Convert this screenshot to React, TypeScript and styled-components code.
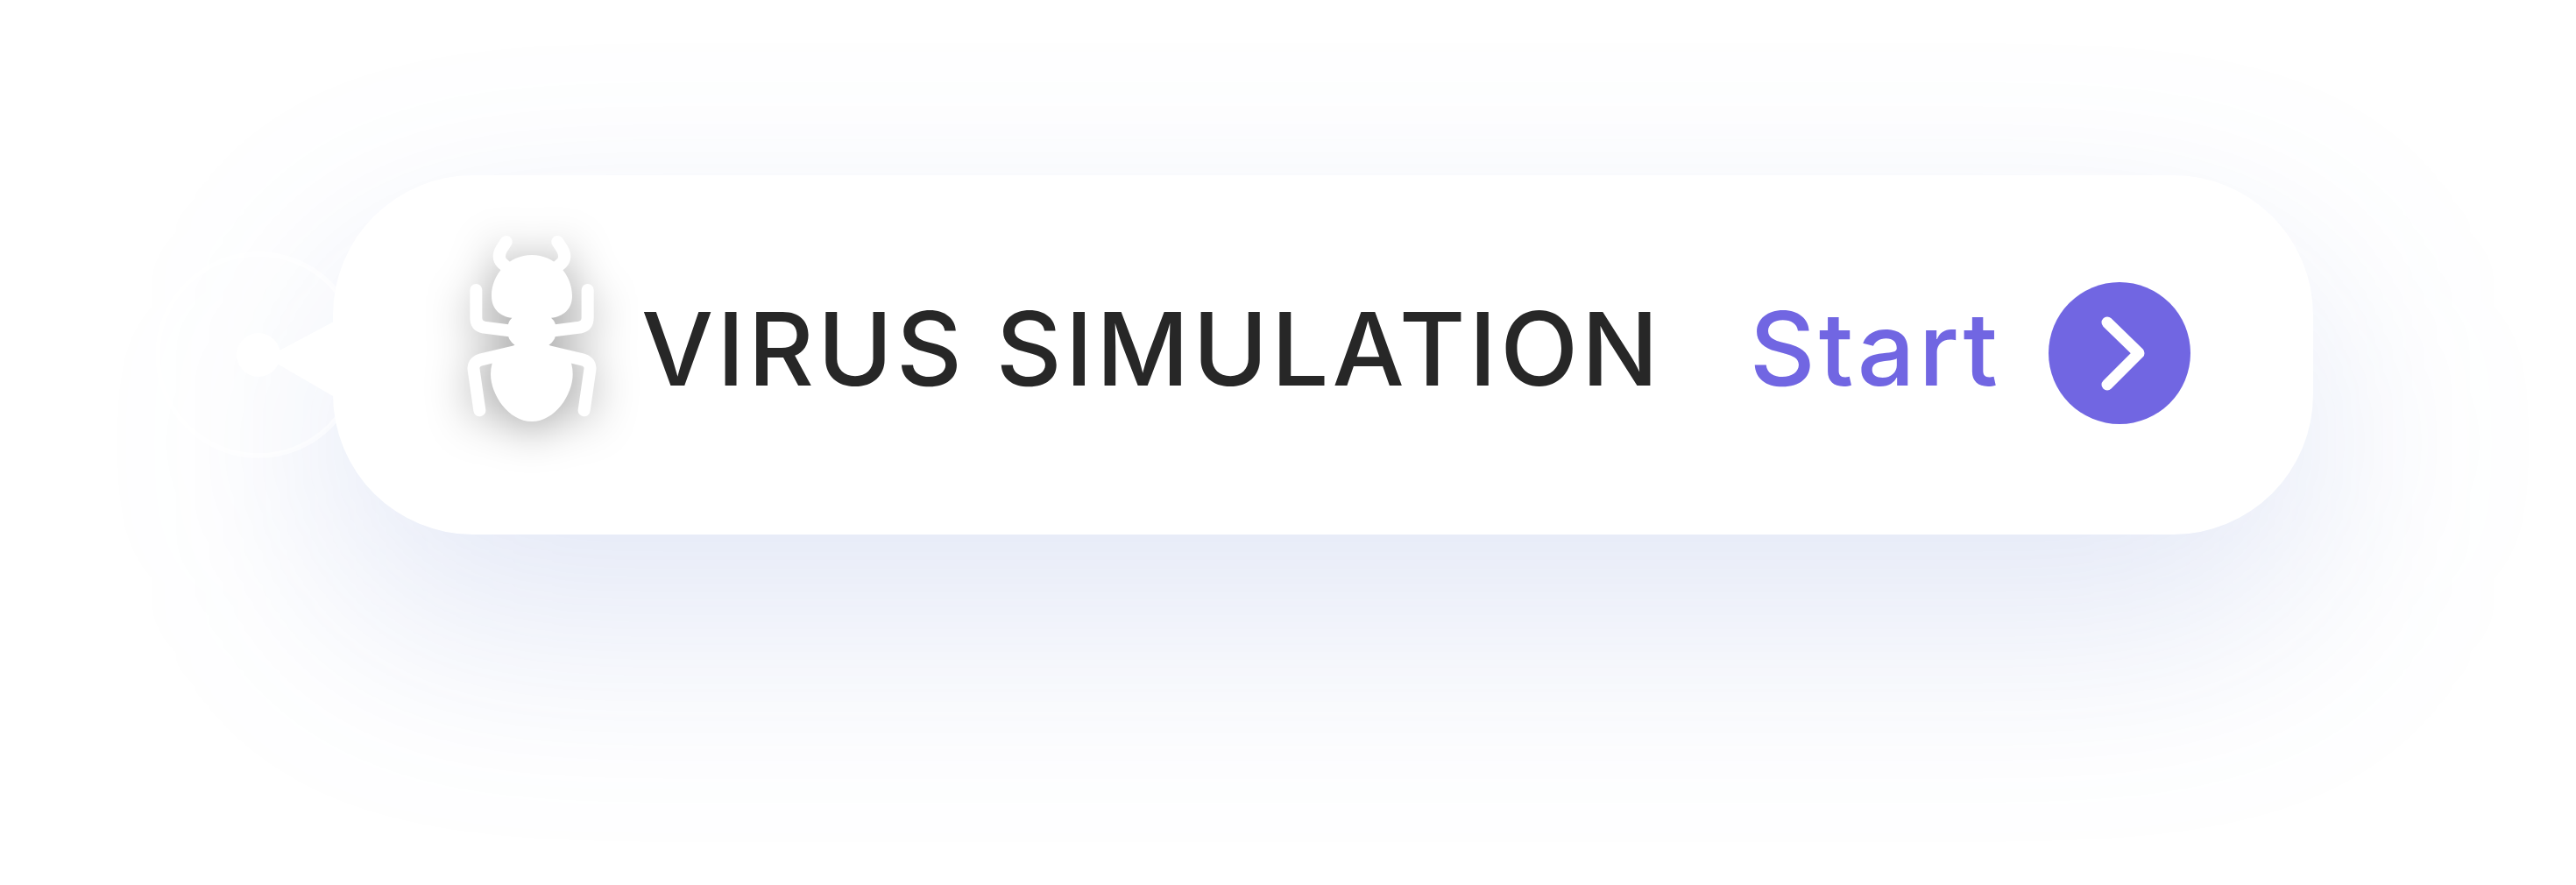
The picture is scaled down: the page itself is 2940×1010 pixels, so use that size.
import React from "react";
import styled, { createGlobalStyle } from "styled-components";

const GlobalStyle = createGlobalStyle`
  *, *::before, *::after { box-sizing: border-box; }
  body {
    margin: 0;
    background: #ffffff;
    font-family: Inter, "Liberation Sans", sans-serif;
  }
`;

const Page = styled.main`
  padding: 200px 300px 400px 380px;
  overflow: hidden;
`;

/* Carries the soft glow and the pointer, both drawn beneath the card. */
const CardShell = styled.div`
  position: relative;
  isolation: isolate;

  &::before {
    content: "";
    position: absolute;
    z-index: -1;
    inset: 100px 0 -100px;
    border-radius: 160px;
    background: rgba(52, 87, 193, 0.145);
    filter: blur(125px);
  }
`;

const Card = styled.section`
  position: relative;
  display: flex;
  align-items: center;
  padding: 68px 140px 82px 152px;
  border-radius: 160px;
  background: #ffffff;
`;

const Pointer = styled.svg`
  position: absolute;
  top: 84px;
  left: -206px;
  width: 240px;
  height: 240px;
`;

const BugIcon = styled.svg`
  flex: none;
  width: 150px;
  height: 214px;
  margin-bottom: 46px;
  overflow: visible;
  filter: drop-shadow(0 10px 24px rgba(0, 0, 0, 0.32));
`;

const Title = styled.h1`
  margin: 0 0 0 50px;
  color: #272727;
  font-size: 116px;
  font-weight: 500;
  line-height: 140px;
  letter-spacing: 4px;
  white-space: nowrap;
`;

const StartButton = styled.button`
  display: flex;
  align-items: center;
  gap: 54px;
  margin-left: auto;
  padding: 0;
  border: 0;
  background: none;
  color: #7166e2;
  font: inherit;
  font-size: 116px;
  font-weight: 500;
  line-height: 140px;
  letter-spacing: 4px;
  cursor: pointer;
`;

const ArrowIcon = styled.svg`
  flex: none;
  width: 162px;
  height: 162px;
  margin-top: 10px;
`;

export default function App() {
  return (
    <>
      <GlobalStyle />
      <Page>
        <CardShell>
          <Pointer viewBox="0 0 240 240" aria-hidden="true">
            <circle cx="121" cy="121" r="115" fill="#ffffff" fillOpacity="0.25" stroke="#ffffff" strokeOpacity="0.5" strokeWidth="6" />
            <circle cx="121" cy="121" r="25" fill="#ffffff" />
            <path d="M130 124L206 83.500H240V168H206Z" fill="#ffffff" />
          </Pointer>
          <Card>
            <BugIcon viewBox="155 113 450 642" aria-hidden="true">
              <g fill="none" stroke="#ffffff" strokeWidth="42" strokeLinecap="round" strokeLinejoin="round">
                <path d="M292 137L276 162Q260 190 278 210L295 225" />
                <path d="M468 137L484 162Q500 190 482 210L465 225" />
                <path d="M189 302V397Q189 424 216 430L310 442" />
                <path d="M571 302V397Q571 424 544 430L450 442" />
                <path d="M201 714L181 576Q177 550 204 541L350 506" />
                <path d="M559 714L579 576Q583 550 556 541L410 506" />
              </g>
              <path
                d="M380 182C458 182 518 248 518 322C518 366 489 393 446 397Q464 412 464 441Q464 472 438 491L500 520Q520 550 520 590C520 660 460 752 380 752C300 752 239 660 239 590Q239 550 260 520L322 491Q296 472 296 441Q296 412 312 397C271 393 242 366 242 322C242 248 302 182 380 182Z"
                fill="#ffffff"
              />
            </BugIcon>
            <Title>VIRUS SIMULATION</Title>
            <StartButton type="button">
              Start
              <ArrowIcon viewBox="0 0 162 162" aria-hidden="true">
                <circle cx="81" cy="81" r="81" fill="#7166e2" />
                <path d="M67 46L103 81L67 117" fill="none" stroke="#ffffff" strokeWidth="13" strokeLinecap="round" strokeLinejoin="round" />
              </ArrowIcon>
            </StartButton>
          </Card>
        </CardShell>
      </Page>
    </>
  );
}
